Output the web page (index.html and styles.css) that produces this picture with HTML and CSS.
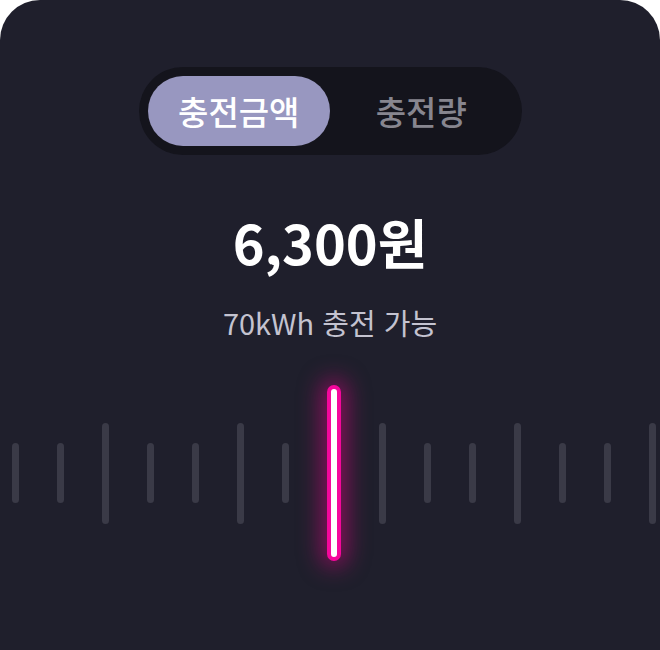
FILE: index.html
```html
<!DOCTYPE html>
<html lang="ko">
<head>
<meta charset="utf-8">
<title>충전</title>
<link rel="stylesheet" href="styles.css">
</head>
<body>
<div class="card">
  <div class="segment">
    <div class="seg-item active">충전금액</div>
    <div class="seg-item">충전량</div>
  </div>
  <div class="amount">6,300원</div>
  <div class="sub">70kWh 충전 가능</div>
  <div class="ruler">
    <span class="tick"></span>
    <span class="tick"></span>
    <span class="tick long"></span>
    <span class="tick"></span>
    <span class="tick"></span>
    <span class="tick long"></span>
    <span class="tick"></span>
    <span class="indicator"></span>
    <span class="tick long"></span>
    <span class="tick"></span>
    <span class="tick"></span>
    <span class="tick long"></span>
    <span class="tick"></span>
    <span class="tick"></span>
    <span class="tick long"></span>
  </div>
</div>
</body>
</html>
```

FILE: styles.css
```css
html, body {
  margin: 0;
  padding: 0;
  background: #ffffff;
}
body {
  font-family: "Noto Sans CJK KR", "Noto Sans", sans-serif;
}
.card {
  width: 660px;
  height: 650px;
  background: #1f1f2c;
  border-radius: 40px 40px 0 0;
  overflow: hidden;
  display: flex;
  flex-direction: column;
  align-items: center;
  padding-top: 67px;
  box-sizing: border-box;
}
.segment {
  display: flex;
  width: 383px;
  height: 88px;
  box-sizing: border-box;
  padding: 9px;
  background: #14141c;
  border-radius: 44px;
}
.seg-item {
  flex: 1;
  display: flex;
  align-items: center;
  justify-content: center;
  border-radius: 35px;
  font-size: 33px;
  font-weight: 500;
  color: #87868f;
}
.seg-item.active {
  background: #9897c0;
  color: #ffffff;
}
.amount {
  margin-top: 57px;
  line-height: 60px;
  font-size: 54px;
  font-weight: 700;
  color: #ffffff;
}
.sub {
  margin-top: 33px;
  line-height: 34px;
  font-size: 29px;
  color: #c4c3d0;
}
.ruler {
  align-self: stretch;
  margin-top: 46px;
  padding-left: 12px;
  display: flex;
  align-items: center;
  gap: 38px;
  height: 176px;
}
.tick {
  flex: none;
  width: 7px;
  height: 60px;
  border-radius: 4px;
  background: #3a3a47;
}
.tick.long {
  height: 101px;
}
.indicator {
  flex: none;
  width: 14px;
  height: 176px;
  box-sizing: border-box;
  border: 4px solid #f5079c;
  border-radius: 7px;
  background: #ffffff;
  box-shadow: 0 0 22px 6px rgba(240, 0, 140, 0.5);
}
```
